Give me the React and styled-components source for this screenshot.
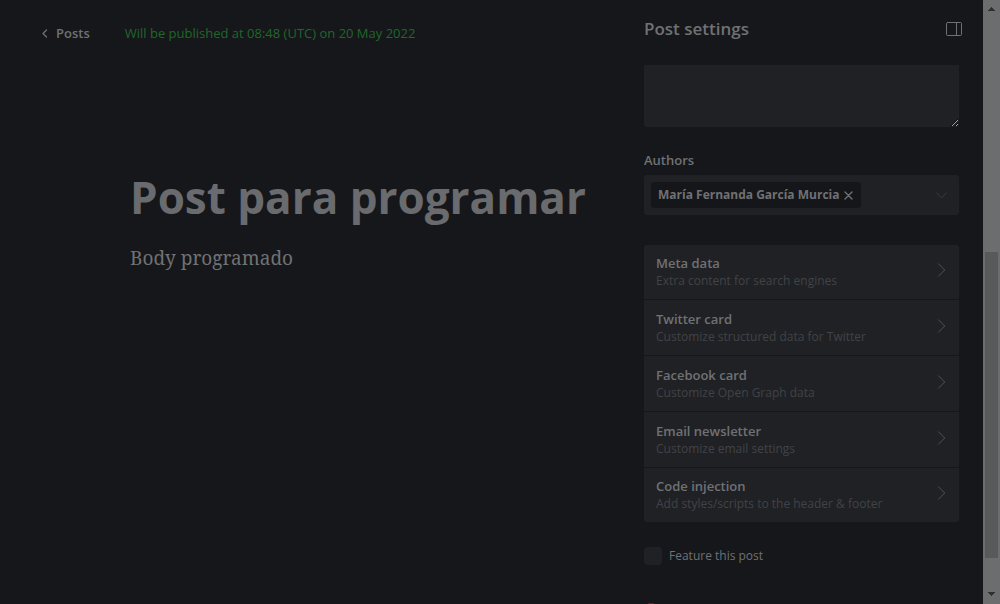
import React from "react";
import styled, { createGlobalStyle, css } from "styled-components";

const GlobalStyle = createGlobalStyle`
  *, *::before, *::after { box-sizing: border-box; }
  body {
    margin: 0;
    background: #16171a;
    color: #707174;
    font-family: "Open Sans", "Noto Sans", sans-serif;
    font-size: 13px;
    line-height: 20px;
  }
  h1, h2, h3, p { margin: 0; }
  button, textarea { font: inherit; color: inherit; }
`;

const bareButton = css`
  display: flex;
  align-items: center;
  padding: 0;
  border: 0;
  background: none;
  cursor: pointer;
`;

const Page = styled.div`
  display: flex;
  height: 100vh;
  overflow: hidden;
`;

const Editor = styled.main`
  flex: 1;
  min-width: 0;
`;

const TopBar = styled.header`
  display: flex;
  align-items: center;
  gap: 35px;
  height: 66px;
  padding-left: 41px;
`;

const BackLink = styled.a`
  display: flex;
  align-items: center;
  gap: 8px;
  color: inherit;
  font-weight: 600;
  text-decoration: none;
`;

const Status = styled.span`
  color: #1f672a;
`;

const Content = styled.article`
  padding: 100px 40px 0 130px;
`;

const Title = styled.h1`
  color: #6a6b6e;
  font-size: 44px;
  line-height: 62px;
  font-weight: 700;
  white-space: nowrap;
`;

const Body = styled.p`
  margin-top: 14px;
  font-family: "Noto Serif", Georgia, "Liberation Serif", serif;
  font-size: 19px;
  line-height: 32px;
`;

const Settings = styled.aside`
  flex: none;
  width: 339px;
  padding-right: 24px;
  overflow: hidden;
`;

const SettingsHeader = styled.header`
  display: flex;
  align-items: center;
  justify-content: space-between;
  height: 65px;
  padding-bottom: 7px;
  margin-right: -3px;
`;

const SettingsTitle = styled.h2`
  font-size: 17px;
  line-height: 24px;
  font-weight: 600;
`;

const IconButton = styled.button`
  ${bareButton}
`;

const Excerpt = styled.textarea`
  display: block;
  width: 100%;
  height: 62px;
  padding: 8px 12px;
  border: 0;
  border-radius: 0 0 3px 3px;
  background: #202124;
  outline: 0;
  resize: vertical;
`;

const Label = styled.h3`
  margin: 23px 0 5px;
  font-size: 13px;
  font-weight: 600;
`;

const AuthorSelect = styled.div`
  display: flex;
  align-items: center;
  justify-content: space-between;
  height: 40px;
  padding: 0 12px 0 7px;
  border-radius: 3px;
  background: #202124;
`;

const Token = styled.span`
  display: flex;
  align-items: center;
  gap: 5px;
  height: 26px;
  padding: 0 8px 0 7px;
  border-radius: 3px;
  background: #151619;
  font-weight: 700;
  font-size: 12px;
  white-space: nowrap;
`;

const CardList = styled.nav`
  display: flex;
  flex-direction: column;
  gap: 1px;
  margin-top: 30px;
  border-radius: 3px;
  overflow: hidden;
`;

const Card = styled.button`
  ${bareButton}
  justify-content: space-between;
  height: 55px;
  padding: 0 13px 0 12px;
  background: #202124;
  text-align: left;

  &:first-child, &:last-child { height: 54px; }

  svg { margin-bottom: 4px; }
`;

const CardTitle = styled.span`
  display: block;
  line-height: 18px;
  font-weight: 600;
`;

const CardNote = styled.span`
  display: block;
  color: #404347;
  font-size: 12px;
  line-height: 18px;
`;

const Feature = styled.label`
  display: flex;
  align-items: center;
  gap: 7px;
  margin-top: 24px;
  font-size: 12px;
`;

const CheckBox = styled.input`
  appearance: none;
  width: 18px;
  height: 18px;
  margin: 0;
  border-radius: 4px;
  background: #202124;
`;

const DeleteButton = styled.button`
  ${bareButton}
  margin-top: 37px;
  color: #671d2c;
`;

const ScrollTrack = styled.div`
  display: flex;
  flex: none;
  flex-direction: column;
  align-items: center;
  justify-content: space-between;
  width: 17px;
  padding: 7px 0 8px;
  background: #6c6d6f;
`;

const ScrollThumb = styled.div`
  width: 13px;
  height: 306px;
  margin-top: 207px;
  background: #58595b;
`;

const Icon = ({ width, height, path, color = "currentColor", weight = 1 }) => (
  <svg
    width={width}
    height={height}
    viewBox={`0 0 ${width} ${height}`}
    fill="none"
    stroke={color}
    strokeWidth={weight}
    strokeLinecap="round"
    strokeLinejoin="round"
    aria-hidden="true"
  >
    <path d={path} />
  </svg>
);

const Arrow = ({ up }) => (
  <svg width="7" height="4" viewBox="0 0 7 4" fill="#2f3032" shapeRendering="crispEdges" aria-hidden="true">
    <path d={up ? "M3 0h1v1h1v1h1v1h1v1H0V3h1V2h1V1h1z" : "M0 0h7v1H6v1H5v1H4v1H3V3H2V2H1V1H0z"} />
  </svg>
);

const cards = [
  ["Meta data", "Extra content for search engines"],
  ["Twitter card", "Customize structured data for Twitter"],
  ["Facebook card", "Customize Open Graph data"],
  ["Email newsletter", "Customize email settings"],
  ["Code injection", "Add styles/scripts to the header & footer"],
];

export default function App() {
  return (
    <Page>
      <GlobalStyle />
      <Editor>
        <TopBar>
          <BackLink href="#posts">
            <Icon width={7} height={9} path="M5.5 1L2 4.5L5.5 8" weight={1.3} />
            Posts
          </BackLink>
          <Status>Will be published at 08:48 (UTC) on 20 May 2022</Status>
        </TopBar>
        <Content>
          <Title>Post para programar</Title>
          <Body>Body programado</Body>
        </Content>
      </Editor>
      <Settings>
        <SettingsHeader>
          <SettingsTitle>Post settings</SettingsTitle>
          <IconButton aria-label="Toggle settings">
            <Icon
              width={16}
              height={14}
              path="M1.5 .5h13a1 1 0 0 1 1 1v11a1 1 0 0 1-1 1h-13a1 1 0 0 1-1-1v-11a1 1 0 0 1 1-1zM10.5 .5v13"
            />
          </IconButton>
        </SettingsHeader>
        <Excerpt aria-label="Excerpt" />
        <Label id="authors">Authors</Label>
        <AuthorSelect role="group" aria-labelledby="authors">
          <Token>
            María Fernanda García Murcia
            <IconButton aria-label="Remove author">
              <Icon width={9} height={9} path="M1 1l7 7M8 1L1 8" weight={1.4} />
            </IconButton>
          </Token>
          <IconButton aria-label="Choose authors">
            <Icon width={11} height={7} path="M.5 .8l5 5l5-5" color="#3a3c3f" />
          </IconButton>
        </AuthorSelect>
        <CardList>
          {cards.map(([title, note]) => (
            <Card key={title}>
              <span>
                <CardTitle>{title}</CardTitle>
                <CardNote>{note}</CardNote>
              </span>
              <Icon width={9} height={14} path="M1.5 .8l6.2 6.2l-6.2 6.2" color="#505255" />
            </Card>
          ))}
        </CardList>
        <Feature>
          <CheckBox type="checkbox" />
          Feature this post
        </Feature>
        <DeleteButton aria-label="Delete post">
          <Icon width={14} height={16} path="M4.5 2.5v-2h5v2M.5 2.5h13M2.5 2.5v13h9v-13" />
        </DeleteButton>
      </Settings>
      <ScrollTrack aria-hidden="true">
        <Arrow up />
        <ScrollThumb />
        <Arrow />
      </ScrollTrack>
    </Page>
  );
}
